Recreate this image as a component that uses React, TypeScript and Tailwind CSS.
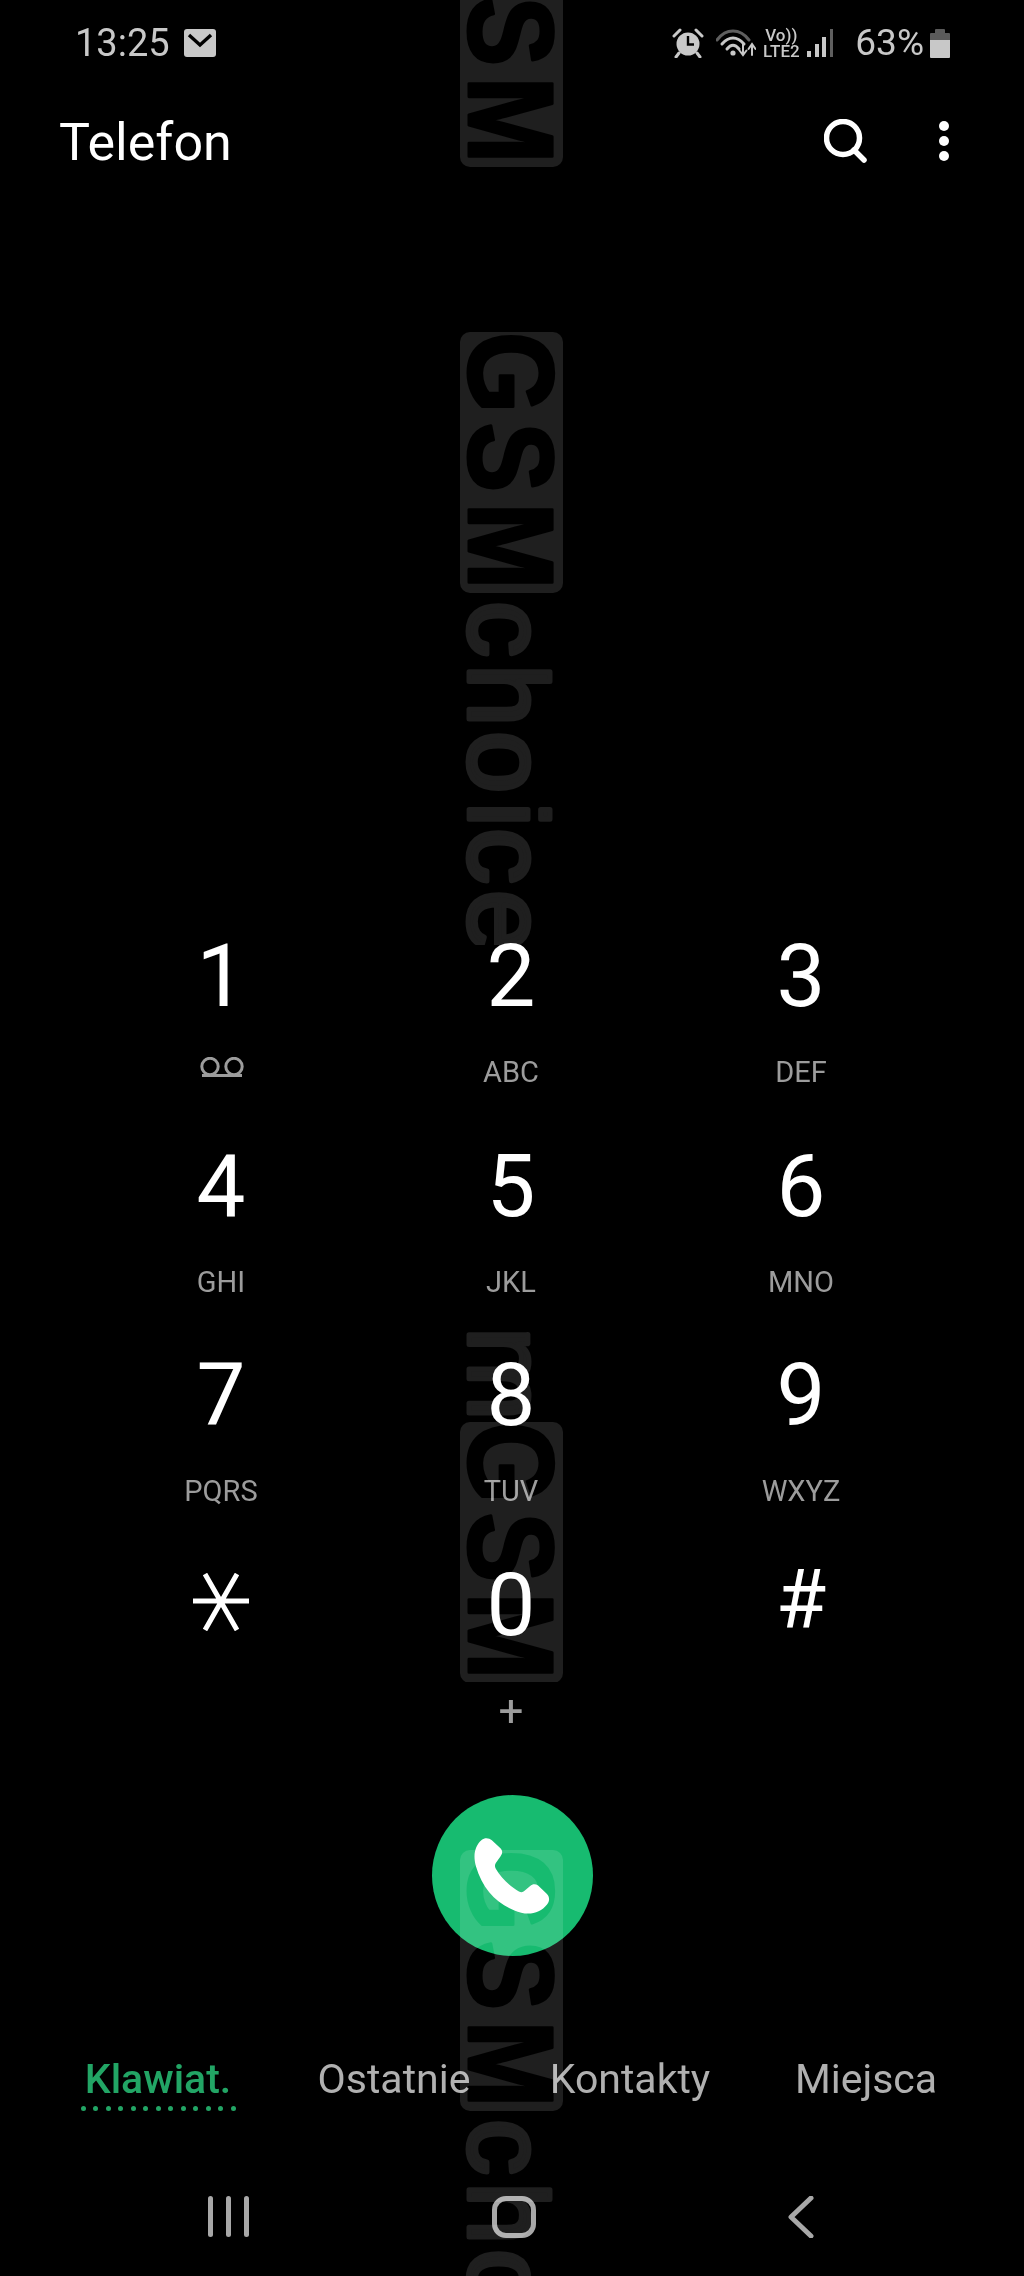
const keys = [
  { digit: '1', sub: null },
  { digit: '2', sub: 'ABC' },
  { digit: '3', sub: 'DEF' },
  { digit: '4', sub: 'GHI' },
  { digit: '5', sub: 'JKL' },
  { digit: '6', sub: 'MNO' },
  { digit: '7', sub: 'PQRS' },
  { digit: '8', sub: 'TUV' },
  { digit: '9', sub: 'WXYZ' },
  { digit: '*', sub: '' },
  { digit: '0', sub: '+' },
  { digit: '#', sub: '' },
];

const tabs = ['Klawiat.', 'Ostatnie', 'Kontakty', 'Miejsca'];

const AlarmIcon = () => (
  <svg width="32" height="30" viewBox="0 0 32 30" className="text-[#c8c8c8]">
    <circle cx="16" cy="16" r="11.5" fill="currentColor" />
    <path d="M16 8v8.5h6" fill="none" stroke="#000" strokeWidth="2.4" />
    <path d="M2 8l6-6M30 8l-6-6M7 25l-3 4M25 25l3 4" fill="none" stroke="currentColor" strokeWidth="3" strokeLinecap="round" />
  </svg>
);

const WifiIcon = () => (
  <svg width="40" height="28" viewBox="0 0 40 28" fill="none" strokeLinecap="round">
    <path d="M1 11C10 -1 24 -1 33 11" stroke="#5f5f5f" strokeWidth="3" />
    <path d="M6 15C13 7 21 7 28 15" stroke="#c8c8c8" strokeWidth="3" />
    <path d="M11 20C15 15 19 15 23 20" stroke="#c8c8c8" strokeWidth="3" />
    <circle cx="17" cy="24" r="2.6" fill="#c8c8c8" />
    <path d="M27 15v10M23.5 21.5L27 26l3.5-4.5" stroke="#c8c8c8" strokeWidth="2" />
    <path d="M36 26V16M32.5 20L36 15l3.5 5" stroke="#c8c8c8" strokeWidth="2" />
  </svg>
);

const SignalIcon = () => (
  <svg width="27" height="30" viewBox="0 0 27 30">
    <rect x="0" y="23" width="4" height="6" fill="#c8c8c8" />
    <rect x="8" y="16" width="4" height="13" fill="#c8c8c8" />
    <rect x="15" y="9" width="4" height="20" fill="#c8c8c8" />
    <rect x="23" y="1" width="3" height="28" fill="#5f5f5f" />
  </svg>
);

const BatteryIcon = () => (
  <svg width="20" height="30" viewBox="0 0 20 30">
    <path d="M5 2a1 1 0 011-1h8a1 1 0 011 1v3h4a1 1 0 011 1v6H0V6a1 1 0 011-1h4z" fill="#5a5a5a" />
    <path d="M0 12h20v17a1 1 0 01-1 1H1a1 1 0 01-1-1z" fill="#c8c8c8" />
  </svg>
);

const VoicemailIcon = () => (
  <svg width="46" height="20" viewBox="0 0 46 20" fill="none" stroke="#9c9c9c" strokeWidth="3">
    <circle cx="11" cy="9.5" r="8.2" />
    <circle cx="35" cy="9.5" r="8.2" />
    <path d="M3 18.5h40" />
  </svg>
);

const StarIcon = () => (
  <svg width="56" height="58" viewBox="0 0 56 58" fill="none" stroke="#fff" strokeWidth="5">
    <path d="M0 28h56M12 1l32 56M44 1L12 57" />
  </svg>
);

// site stamp running down the middle of the screen, cut into four pieces
const stamps = [
  { top: -94, from: 0, to: 167 },
  { top: 332, from: 332, to: 945 },
  { top: 1422, from: 1327, to: 1682 },
  { top: 1850, from: 1850, to: 2276 },
];

const Stamp = () => (
  <svg
    viewBox="460 0 104 2276"
    className="absolute left-[460px] top-0 h-[2276px] w-[104px] mix-blend-screen pointer-events-none"
  >
    <defs>
      {stamps.map((s, i) => (
        <clipPath id={`stamp-${i}`} key={i}>
          <rect x="460" y={s.from} width="104" height={s.to - s.from} />
        </clipPath>
      ))}
    </defs>
    {stamps.map((s, i) => (
      <g key={i} clipPath={`url(#stamp-${i})`}>
        <rect x="460" y={s.top} width="103" height="261" rx="10" fill="#1f1f1f" />
        <text
          transform={`translate(469 ${s.top}) rotate(90) scale(0.87 1)`}
          x="0 104 196"
          fontFamily="Liberation Sans"
          fontWeight="700"
          fontSize="120"
          fill="#000"
          stroke="#000"
          strokeWidth="3"
          strokeLinejoin="round"
        >
          GSM
        </text>
        <text
          transform={`translate(469 ${s.top}) rotate(90)`}
          x="269 332 399 470 496 558"
          fontFamily="Liberation Sans"
          fontSize="112"
          fill="#1f1f1f"
          stroke="#1f1f1f"
          strokeWidth="5"
          strokeLinejoin="round"
        >
          choice
        </text>
        {i === 2 && (
          <text
            transform="translate(469 1327) rotate(90)"
            fontFamily="Liberation Sans"
            fontSize="112"
            fill="#1f1f1f"
            stroke="#1f1f1f"
            strokeWidth="5"
            strokeLinejoin="round"
          >
            m
          </text>
        )}
      </g>
    ))}
  </svg>
);

const Key = ({ digit, sub }: { digit: string; sub: string | null }) => (
  <div className="flex h-[209.5px] flex-col items-center">
    <div
      className={
        digit === '#'
          ? 'flex h-[108px] items-center justify-center pb-[12px] text-[82px] leading-[96px] font-normal text-white'
          : digit === '*'
            ? 'flex h-[108px] items-center justify-center pb-[6px] text-white'
            : 'flex h-[108px] items-center justify-center text-[87px] leading-[108px] font-normal text-white'
      }
    >
      {digit === '*' ? <StarIcon /> : digit}
    </div>
    {sub === '+' ? (
      <div className="mt-[32px] flex h-[40px] items-center justify-center text-[44px] leading-[40px] font-normal text-[#9c9c9c]">+</div>
    ) : (
      <div className={sub === null ? 'mt-[19px] flex h-[36px] items-center justify-center pl-[2px] text-[#9c9c9c]' : 'mt-[24px] flex h-[36px] items-center justify-center text-[29px] leading-[36px] text-[#9c9c9c]'}>
        {sub === null ? <VoicemailIcon /> : sub}
      </div>
    )}
  </div>
);

export default function App() {
  return (
    <div className="relative flex h-[2276px] w-[1024px] flex-col overflow-hidden bg-black font-['Roboto',sans-serif]">
      <div className="flex h-[85px] items-center justify-between pl-[75px] pr-[74px] text-[#c8c8c8]">
        <div className="flex items-center gap-[14px]">
          <span className="text-[38px] leading-none font-normal">13:25</span>
          <svg width="32" height="28" viewBox="0 0 32 28">
            <rect width="32" height="28" rx="3" fill="#c8c8c8" />
            <path d="M5 6l11 10L27 6" fill="none" stroke="#000" strokeWidth="3.4" />
          </svg>
        </div>
        <div className="flex items-center">
          <AlarmIcon />
          <div className="ml-[12px]"><WifiIcon /></div>
          <div className="ml-[6px] flex w-[38px] flex-col items-center text-[17px] leading-[16px] font-medium">
            <span>Vo))</span>
            <span>LTE2</span>
          </div>
          <div className="ml-[7px]"><SignalIcon /></div>
          <span className="ml-[21px] text-[37px] leading-none font-normal">63%</span>
          <div className="ml-[6px]"><BatteryIcon /></div>
        </div>
      </div>

      <div className="flex h-[111px] items-center justify-between pl-[59px] pr-[75px]">
        <span className="pt-[5px] text-[52px] leading-none text-white">Telefon</span>
        <div className="flex items-center gap-[71px]">
          <svg width="44" height="44" viewBox="0 0 44 44" fill="none" stroke="#fff" strokeWidth="5.5" strokeLinecap="round">
            <circle cx="19" cy="19" r="16.5" />
            <path d="M30 31l10 10" />
          </svg>
          <div className="flex flex-col gap-[5px]">
            <div className="h-[10px] w-[10px] rounded-full bg-white" />
            <div className="h-[10px] w-[10px] rounded-full bg-white" />
            <div className="h-[10px] w-[10px] rounded-full bg-white" />
          </div>
        </div>
      </div>

      <div className="mt-[726px] ml-[76px] grid w-[870px] grid-cols-3">
        {keys.map((k) => (
          <Key key={k.digit} digit={k.digit} sub={k.sub} />
        ))}
      </div>

      <div className="mt-[35px] flex justify-center">
        <div className="flex h-[161px] w-[161px] items-center justify-center rounded-full bg-[#17bb70]">
          <svg width="76" height="76" viewBox="222 234 230 230">
            <path
              d="M245 240C255 232 268 234 276 241L302 265C310 273 308 282 302 290L288 310C284 316 285 322 288 327C304 354 330 380 358 396C364 399 370 399 375 394L392 379C399 373 408 372 416 378L442 403C452 413 451 425 443 435C425 458 395 468 365 460C300 442 250 395 228 320C218 285 225 258 245 240Z"
              fill="#fff"
            />
          </svg>
        </div>
      </div>

      <div className="mt-[93px] ml-[40px] grid w-[944px] grid-cols-4 text-center">
        {tabs.map((t, i) => (
          <div key={t} className="flex flex-col items-center">
            <span className={i === 0 ? 'text-[41px] leading-[60px] font-medium text-[#22a565]' : 'text-[41px] leading-[60px] text-[#b0b0b0]'}>
              {t}
            </span>
            {i === 0 && (
              <div className="mt-[-3px] flex gap-[7.5px]">
                {Array.from({ length: 13 }).map((_, d) => (
                  <div key={d} className="h-[5px] w-[5px] rounded-full bg-[#22a565]" />
                ))}
              </div>
            )}
          </div>
        ))}
      </div>

      <div className="mt-[85px] ml-[84px] grid w-[860px] grid-cols-3 justify-items-center">
        <div className="flex gap-[13px] pl-[2px]">
          <div className="h-[41px] w-[5px] rounded-full bg-[#a8a8a8]" />
          <div className="h-[41px] w-[5px] rounded-full bg-[#a8a8a8]" />
          <div className="h-[41px] w-[5px] rounded-full bg-[#a8a8a8]" />
        </div>
        <div className="h-[42px] w-[44px] rounded-[14px] border-[5px] border-[#a8a8a8]" />
        <svg width="26" height="42" viewBox="0 0 26 42" fill="none" stroke="#a8a8a8" strokeWidth="5" strokeLinecap="round" strokeLinejoin="round">
          <path d="M23 2L3 21l20 19" />
        </svg>
      </div>

      <Stamp />
    </div>
  );
}
